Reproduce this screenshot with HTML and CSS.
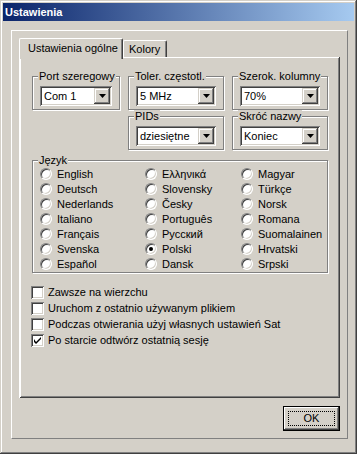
FILE: index.html
```html
<!DOCTYPE html>
<html lang="pl">
<head>
    <meta charset="UTF-8">
    <title>Ustawienia</title>
    <link rel="stylesheet" href="styles.css">
</head>
<body>
    <div class="window">
        <div class="titlebar">Ustawienia</div>
        <div class="frame">
            <div class="tabs">
                <div class="tab active">Ustawienia ogólne</div>
                <div class="tab">Kolory</div>
            </div>
            <div class="tabpanel">
                <div class="combos">
                    <div class="group">
                        <div class="legend">Port szeregowy</div>
                        <div class="combo w72"><span class="value">Com 1</span><span class="arrow"><svg width="7" height="4" viewBox="0 0 7 4"><path d="M0 0h7L3.5 4z" fill="#000"/></svg></span></div>
                    </div>
                    <div class="group">
                        <div class="legend">Toler. częstotl.</div>
                        <div class="combo"><span class="value">5 MHz</span><span class="arrow"><svg width="7" height="4" viewBox="0 0 7 4"><path d="M0 0h7L3.5 4z" fill="#000"/></svg></span></div>
                    </div>
                    <div class="group">
                        <div class="legend">Szerok. kolumny</div>
                        <div class="combo"><span class="value">70%</span><span class="arrow"><svg width="7" height="4" viewBox="0 0 7 4"><path d="M0 0h7L3.5 4z" fill="#000"/></svg></span></div>
                    </div>
                    <div class="group col2">
                        <div class="legend">PIDs</div>
                        <div class="combo"><span class="value">dziesiętne</span><span class="arrow"><svg width="7" height="4" viewBox="0 0 7 4"><path d="M0 0h7L3.5 4z" fill="#000"/></svg></span></div>
                    </div>
                    <div class="group">
                        <div class="legend">Skróć nazwy</div>
                        <div class="combo"><span class="value">Koniec</span><span class="arrow"><svg width="7" height="4" viewBox="0 0 7 4"><path d="M0 0h7L3.5 4z" fill="#000"/></svg></span></div>
                    </div>
                </div>

                <div class="group lang">
                    <div class="legend">Język</div>
                    <div class="radios">
                        <div class="radio"><span class="dot"></span>English</div>
                        <div class="radio"><span class="dot"></span>Ελληνικά</div>
                        <div class="radio"><span class="dot"></span>Magyar</div>
                        <div class="radio"><span class="dot"></span>Deutsch</div>
                        <div class="radio"><span class="dot"></span>Slovensky</div>
                        <div class="radio"><span class="dot"></span>Türkçe</div>
                        <div class="radio"><span class="dot"></span>Nederlands</div>
                        <div class="radio"><span class="dot"></span>Česky</div>
                        <div class="radio"><span class="dot"></span>Norsk</div>
                        <div class="radio"><span class="dot"></span>Italiano</div>
                        <div class="radio"><span class="dot"></span>Português</div>
                        <div class="radio"><span class="dot"></span>Romana</div>
                        <div class="radio"><span class="dot"></span>Français</div>
                        <div class="radio"><span class="dot"></span>Русский</div>
                        <div class="radio"><span class="dot"></span>Suomalainen</div>
                        <div class="radio"><span class="dot"></span>Svenska</div>
                        <div class="radio"><span class="dot checked"></span>Polski</div>
                        <div class="radio"><span class="dot"></span>Hrvatski</div>
                        <div class="radio"><span class="dot"></span>Español</div>
                        <div class="radio"><span class="dot"></span>Dansk</div>
                        <div class="radio"><span class="dot"></span>Srpski</div>
                    </div>
                </div>

                <div class="checks">
                    <div class="check"><span class="box"></span>Zawsze na wierzchu</div>
                    <div class="check"><span class="box"></span>Uruchom z ostatnio używanym plikiem</div>
                    <div class="check"><span class="box"></span>Podczas otwierania użyj własnych ustawień Sat</div>
                    <div class="check"><span class="box"><svg width="7" height="7" viewBox="0 0 7 7"><path d="M0 2v3l2 2 5-5V-0L2 5z" fill="#000"/></svg></span>Po starcie odtwórz ostatnią sesję</div>
                </div>
            </div>
            <div class="buttons">
                <button class="ok"><span>OK</span></button>
            </div>
        </div>
    </div>
</body>
</html>
```

FILE: styles.css
```css
body {
    margin: 0;
    font-family: "Liberation Sans", Arial, sans-serif;
    font-size: 11px;
    color: #000;
}
.window {
    width: 357px;
    height: 454px;
    box-sizing: border-box;
    padding: 3px;
    background-color: #D4D0C8;
    box-shadow: inset -1px -1px #404040, inset 1px 1px #D4D0C8, inset -2px -2px #808080, inset 2px 2px #fff;
}
.titlebar {
    height: 18px;
    line-height: 18px;
    padding-left: 2px;
    background: linear-gradient(to right, #0A246A, #A6CAF0);
    color: white;
    font-weight: bold;
}
.frame {
    margin: 9px 6px 0 8px;
    height: 409px;
    box-sizing: border-box;
    border: 1px solid;
    border-color: #fff #808080 #808080 #fff;
    padding: 7px 7px 0 7px;
}
.tabs {
    display: flex;
    align-items: flex-end;
    height: 19px;
}
.tab {
    box-sizing: border-box;
    height: 17px;
    padding: 2px 6px 0 5px;
    border-radius: 2px 2px 0 0;
    border-left: 1px solid #fff;
    border-top: 1px solid #fff;
    border-right: 1px solid #404040;
    box-shadow: inset -1px 0 #808080;
    background-color: #D4D0C8;
}
.tab.active {
    position: relative;
    z-index: 1;
    width: 104px;
    height: 21px;
    margin-bottom: -2px;
    padding: 3px 0 0 8px;
}
.tabpanel {
    height: 341px;
    box-sizing: border-box;
    padding: 19px 0 0 12px;
    box-shadow: inset -1px -1px #404040, inset 1px 1px #fff, inset -2px -2px #808080;
    border-left: 1px solid #fff;
}
.combos {
    display: grid;
    grid-template-columns: 88px 96px 96px;
    column-gap: 8px;
    row-gap: 6px;
}
.col2 {
    grid-column: 2;
}
.group {
    box-sizing: border-box;
    border: 1px solid #808080;
    box-shadow: inset 1px 1px #fff, 1px 1px #fff;
    padding: 0 7px 3px 7px;
}
.legend {
    display: table;
    white-space: nowrap;
    margin: -7px 0 0 -2px;
    padding: 0 1px;
    line-height: 13px;
    background-color: #D4D0C8;
}
.combo {
    display: flex;
    justify-content: space-between;
    width: 80px;
    height: 20px;
    margin-top: 3px;
    box-sizing: border-box;
    padding: 2px;
    background-color: white;
    box-shadow: inset 1px 1px #808080, inset -1px -1px #fff, inset 2px 2px #404040, inset -2px -2px #D4D0C8;
}
.combo.w72 {
    width: 72px;
}
.value {
    padding-left: 2px;
    line-height: 16px;
}
.arrow {
    display: flex;
    align-items: center;
    justify-content: center;
    width: 16px;
    height: 16px;
    background-color: #D4D0C8;
    box-shadow: inset -1px -1px #404040, inset 1px 1px #D4D0C8, inset -2px -2px #808080, inset 2px 2px #fff;
}
.lang {
    width: 296px;
    margin-top: 10px;
    padding: 0 0 1px 7px;
}
.lang .legend {
    margin-bottom: -1px;
}
.radios {
    display: grid;
    grid-template-columns: 105px 96px auto;
}
.radio {
    display: flex;
    align-items: center;
    height: 15px;
}
.dot {
    position: relative;
    width: 12px;
    height: 12px;
    box-sizing: border-box;
    margin-right: 5px;
    border-radius: 50%;
    border: 1px solid;
    border-color: #808080 #fff #fff #808080;
    background-color: white;
    box-shadow: inset 1px 1px #404040, inset -1px -1px #D4D0C8;
}
.dot.checked::after {
    content: "";
    position: absolute;
    left: 3px;
    top: 3px;
    width: 4px;
    height: 4px;
    border-radius: 50%;
    background-color: black;
}
.checks {
    margin: 11px 0 0 -1px;
}
.check {
    display: flex;
    align-items: center;
    height: 16px;
}
.box {
    display: flex;
    align-items: center;
    justify-content: center;
    width: 13px;
    height: 13px;
    box-sizing: border-box;
    margin-right: 4px;
    background-color: white;
    box-shadow: inset 1px 1px #808080, inset -1px -1px #fff, inset 2px 2px #404040, inset -2px -2px #D4D0C8;
}
.buttons {
    display: flex;
    justify-content: flex-end;
    margin-top: 8px;
}
.ok {
    width: 57px;
    height: 25px;
    padding: 4px;
    border: 1px solid black;
    background-color: #D4D0C8;
    box-shadow: inset -1px -1px #404040, inset 1px 1px #fff, inset -2px -2px #808080, inset 2px 2px #D4D0C8;
    font-family: "Liberation Sans", Arial, sans-serif;
    font-size: 11px;
}
.ok span {
    display: block;
    height: 100%;
    box-sizing: border-box;
    line-height: 13px;
    border: 1px dotted black;
}
```
